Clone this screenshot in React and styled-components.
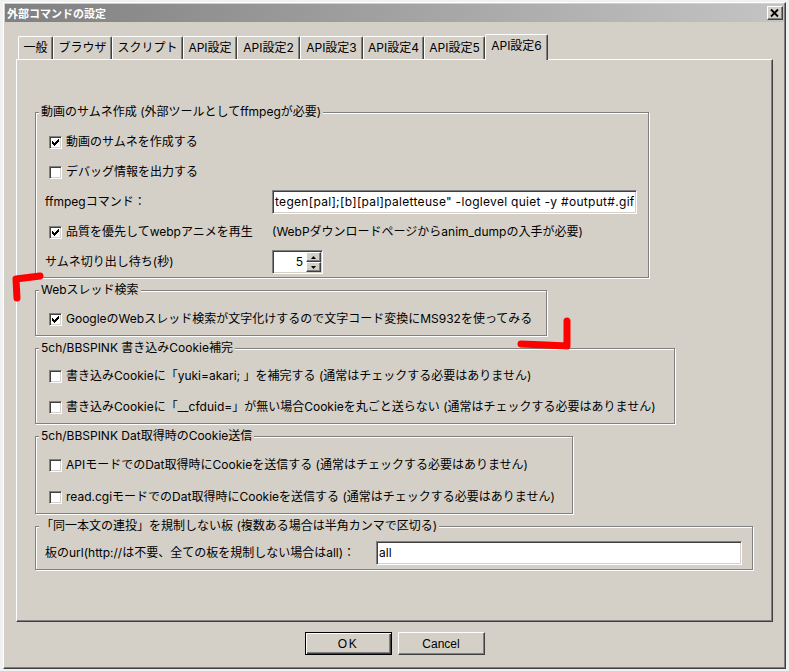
import React from "react";
import styled, { createGlobalStyle } from "styled-components";

const FONT = `"Noto Sans CJK JP", "Noto Sans", sans-serif`;
const UIFONT = `Inter, "Noto Sans CJK JP", sans-serif`;

const GlobalStyle = createGlobalStyle`
  html, body { margin: 0; padding: 0; }
  body {
    background: #f1f1f1;
    width: 789px;
    height: 671px;
    overflow: hidden;
    font-family: ${UIFONT};
    color: #000;
  }
  #root { width: 789px; height: 671px; }
`;

const Screen = styled.div`
  position: relative;
  width: 789px;
  height: 671px;
  box-sizing: border-box;
  padding: 2px 0 0 3px;
`;

const Window = styled.div`
  width: 783px;
  height: 667px;
  box-sizing: border-box;
  background: #d4d0c8;
  border: 1px solid;
  border-color: #fff #404040 #404040 #fff;
  box-shadow: inset -1px -1px 0 #808080;
  padding: 1px;
  display: flex;
  flex-direction: column;
`;

const TitleBar = styled.div`
  flex: none;
  height: 18px;
  display: flex;
  align-items: center;
  justify-content: space-between;
  padding: 0 1px 0 2px;
  background: linear-gradient(to right, #808080, #c4c4c4);
`;

const Title = styled.span`
  color: #fff;
  font: bold 11px/14px ${FONT};
  white-space: nowrap;
`;

const CloseButton = styled.div`
  width: 16px;
  height: 14px;
  box-sizing: border-box;
  background: #d4d0c8;
  border: 1px solid;
  border-color: #fff #404040 #404040 #fff;
  box-shadow: inset -1px -1px 0 #808080;
  svg { display: block; }
`;

const Content = styled.div`
  flex: 1;
  display: flex;
  flex-direction: column;
  padding: 12px 11px 0;
`;

const TabStrip = styled.div`
  display: flex;
  align-items: flex-end;
  height: 25px;
  padding-left: 2px;
`;

const Tab = styled.div`
  position: relative;
  z-index: ${(p) => (p.$active ? 2 : 0)};
  width: ${(p) => p.$w}px;
  height: ${(p) => (p.$active ? 26 : 23)}px;
  margin-bottom: ${(p) => (p.$active ? -1 : 0)}px;
  box-sizing: border-box;
  background: #d4d0c8;
  border-top: 1px solid #fff;
  border-left: 1px solid #fff;
  border-right: 1px solid #404040;
  border-radius: 2px 2px 0 0;
  box-shadow: inset -1px 0 0 #808080;
  display: flex;
  align-items: ${(p) => (p.$active ? "flex-start" : "center")};
  padding-top: ${(p) => (p.$active ? 3 : 0)}px;
  justify-content: center;
  font: 12px/16px ${UIFONT};
  white-space: nowrap;
`;

const Panel = styled.div`
  height: 563px;
  box-sizing: border-box;
  border: 1px solid;
  border-color: #fff #404040 #404040 #fff;
  box-shadow: inset -1px -1px 0 #808080;
  padding: 52px 0 0 18px;
  display: flex;
  flex-direction: column;
  align-items: flex-start;
  gap: 12px;
`;

const Group = styled.div`
  position: relative;
  width: ${(p) => p.$w}px;
  height: ${(p) => p.$h}px;
  box-sizing: border-box;
  border: 1px solid #808080;
  box-shadow: inset 1px 1px 0 #fff, 1px 1px 0 #fff;
  padding: ${(p) => p.$pt}px 0 0 9px;
  display: flex;
  flex-direction: column;
  gap: ${(p) => p.$gap || 0}px;
`;

const Legend = styled.span`
  position: absolute;
  top: -8px;
  left: 3px;
  padding: 0 2px;
  background: #d4d0c8;
  font: 12px/14px ${UIFONT};
  white-space: nowrap;
`;

const Row = styled.div`
  display: flex;
  align-items: center;
  height: 24px;
`;

const CheckRow = styled.label`
  display: flex;
  align-items: center;
  height: 24px;
  margin-left: 4px;
  width: ${(p) => (p.$w ? `${p.$w}px` : "auto")};
  flex: none;
`;

const Box = styled.span`
  flex: none;
  width: 13px;
  height: 13px;
  box-sizing: border-box;
  background: #fff;
  border: 1px solid;
  border-color: #808080 #fff #fff #808080;
  box-shadow: inset 1px 1px 0 #404040, inset -1px -1px 0 #d4d0c8;
  svg { display: block; }
`;

const Text = styled.span`
  font: 12px/16px ${UIFONT};
  white-space: nowrap;
  margin-left: ${(p) => p.$ml || 0}px;
`;

const FieldLabel = styled.span`
  flex: none;
  width: ${(p) => p.$w}px;
  font: 12px/16px ${UIFONT};
  white-space: nowrap;
`;

const Sunken = styled.div`
  box-sizing: border-box;
  background: #fff;
  border: 1px solid;
  border-color: #808080 #fff #fff #808080;
  box-shadow: inset 1px 1px 0 #404040, inset -1px -1px 0 #d4d0c8;
`;

const TextBox = styled(Sunken)`
  flex: none;
  width: ${(p) => p.$w}px;
  height: 24px;
  display: flex;
  align-items: center;
  overflow: hidden;
  padding: 0 1px 0 2px;
  font: 12px/16px ${UIFONT};
  letter-spacing: ${(p) => p.$ls || 0}px;
  white-space: nowrap;
`;

const Spinner = styled(Sunken)`
  flex: none;
  width: 51px;
  height: 24px;
  padding: 1px;
  display: flex;
`;

const SpinValue = styled.div`
  flex: 1;
  display: flex;
  align-items: center;
  justify-content: flex-end;
  padding-right: 3px;
  font: 12px/16px ${UIFONT};
`;

const SpinButtons = styled.div`
  width: 15px;
  display: flex;
  flex-direction: column;
`;

const SpinBtn = styled.div`
  flex: 1;
  box-sizing: border-box;
  background: #d4d0c8;
  border: 1px solid;
  border-color: #fff #404040 #404040 #fff;
  box-shadow: inset -1px -1px 0 #808080;
  display: flex;
  align-items: center;
  justify-content: center;
  svg { display: block; }
`;

const ButtonRow = styled.div`
  display: flex;
  justify-content: center;
  gap: 6px;
  margin-top: 10px;
`;

const PushButton = styled.div`
  width: 87px;
  height: 23px;
  box-sizing: border-box;
  background: #d4d0c8;
  display: flex;
  align-items: center;
  justify-content: center;
  font: 12px/14px "Liberation Sans", Arial, sans-serif;
  letter-spacing: ${(p) => (p.$default ? "1.5px" : "0")};
  border: 1px solid;
  border-color: ${(p) => (p.$default ? "#000" : "#fff #404040 #404040 #fff")};
  box-shadow: ${(p) =>
    p.$default
      ? "inset 1px 1px 0 #fff, inset -1px -1px 0 #404040, inset -2px -2px 0 #808080"
      : "inset -1px -1px 0 #808080"};
`;

const Overlay = styled.svg`
  position: absolute;
  left: 0;
  top: 0;
  pointer-events: none;
`;

const CheckMark = () => (
  <svg width="11" height="11" viewBox="0 0 11 11" shapeRendering="crispEdges">
    {[
      [2, 4],
      [3, 5],
      [4, 6],
      [5, 5],
      [6, 4],
      [7, 3],
      [8, 2],
    ].map(([x, y]) => (
      <rect key={x} x={x} y={y} width="1" height="3" fill="#000" />
    ))}
  </svg>
);

const Checkbox = ({ checked, label, w }) => (
  <CheckRow $w={w}>
    <Box>{checked && <CheckMark />}</Box>
    <Text $ml={4}>{label}</Text>
  </CheckRow>
);

const tabs = [
  ["一般", 35],
  ["ブラウザ", 59],
  ["スクリプト", 71],
  ["API設定", 54],
  ["API設定2", 63],
  ["API設定3", 63],
  ["API設定4", 61],
  ["API設定5", 61],
  ["API設定6", 63],
];

export default function App() {
  return (
    <>
      <GlobalStyle />
      <Screen>
        <Window>
          <TitleBar>
            <Title>外部コマンドの設定</Title>
            <CloseButton>
              <svg width="14" height="12" viewBox="0 0 14 12">
                <path d="M3 2.5 L10 9.5 M10 2.5 L3 9.5" stroke="#000" strokeWidth="1.8" fill="none" />
              </svg>
            </CloseButton>
          </TitleBar>
          <Content>
            <TabStrip>
              {tabs.map(([name, w], i) => (
                <Tab key={name} $w={w} $active={i === tabs.length - 1}>
                  {name}
                </Tab>
              ))}
            </TabStrip>
            <Panel>
              <Group $w={614} $h={166} $pt={17} $gap={6}>
                <Legend>動画のサムネ作成 (外部ツールとしてffmpegが必要)</Legend>
                <Checkbox checked label="動画のサムネを作成する" />
                <Checkbox label="デバッグ情報を出力する" />
                <Row>
                  <FieldLabel $w={227}>ffmpegコマンド：</FieldLabel>
                  <TextBox $w={365} $ls={0.3}>
                    tegen[pal];[b][pal]paletteuse" -loglevel quiet -y #output#.gif
                  </TextBox>
                </Row>
                <Row>
                  <Checkbox checked w={223} label="品質を優先してwebpアニメを再生" />
                  <Text>(WebPダウンロードページからanim_dumpの入手が必要)</Text>
                </Row>
                <Row>
                  <FieldLabel $w={227}>サムネ切り出し待ち(秒)</FieldLabel>
                  <Spinner>
                    <SpinValue>5</SpinValue>
                    <SpinButtons>
                      <SpinBtn>
                        <svg width="5" height="3" viewBox="0 0 5 3">
                          <polygon points="0,3 5,3 2.5,0" fill="#000" />
                        </svg>
                      </SpinBtn>
                      <SpinBtn>
                        <svg width="5" height="3" viewBox="0 0 5 3">
                          <polygon points="0,0 5,0 2.5,3" fill="#000" />
                        </svg>
                      </SpinBtn>
                    </SpinButtons>
                  </Spinner>
                </Row>
              </Group>

              <Group $w={512} $h={46} $pt={16}>
                <Legend>Webスレッド検索</Legend>
                <Checkbox
                  checked
                  label="GoogleのWebスレッド検索が文字化けするので文字コード変換にMS932を使ってみる"
                />
              </Group>

              <Group $w={640} $h={76} $pt={15} $gap={7}>
                <Legend>5ch/BBSPINK 書き込みCookie補完</Legend>
                <Checkbox label="書き込みCookieに「yuki=akari; 」を補完する (通常はチェックする必要はありません)" />
                <Checkbox label="書き込みCookieに「__cfduid=」が無い場合Cookieを丸ごと送らない (通常はチェックする必要はありません)" />
              </Group>

              <Group $w={538} $h={78} $pt={16} $gap={8}>
                <Legend>5ch/BBSPINK Dat取得時のCookie送信</Legend>
                <Checkbox label="APIモードでのDat取得時にCookieを送信する (通常はチェックする必要はありません)" />
                <Checkbox label="read.cgiモードでのDat取得時にCookieを送信する (通常はチェックする必要はありません)" />
              </Group>

              <Group $w={718} $h={44} $pt={14}>
                <Legend>「同一本文の連投」を規制しない板 (複数ある場合は半角カンマで区切る)</Legend>
                <Row>
                  <FieldLabel $w={331}>板のurl(http://は不要、全ての板を規制しない場合はall)：</FieldLabel>
                  <TextBox $w={366}>all</TextBox>
                </Row>
              </Group>
            </Panel>
            <ButtonRow>
              <PushButton $default>OK</PushButton>
              <PushButton>Cancel</PushButton>
            </ButtonRow>
          </Content>
        </Window>
        <Overlay width="789" height="671" viewBox="0 0 789 671">
          <path
            d="M17 298 L16 279 L40 276"
            stroke="#ff0000"
            strokeWidth="7"
            fill="none"
            strokeLinecap="round"
            strokeLinejoin="round"
          />
          <path
            d="M521 344 L546 345 L567 346 L567 321"
            stroke="#ff0000"
            strokeWidth="7"
            fill="none"
            strokeLinecap="round"
            strokeLinejoin="round"
          />
        </Overlay>
      </Screen>
    </>
  );
}
